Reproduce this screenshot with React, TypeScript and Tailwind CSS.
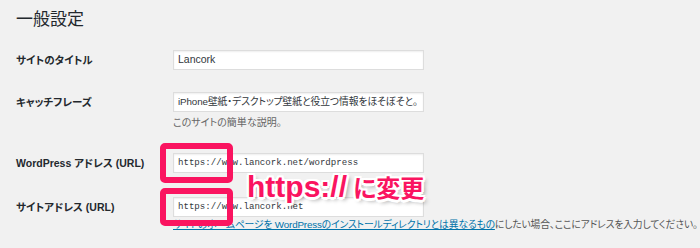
const sans = "font-['Liberation_Sans','Noto_Sans_CJK_JP',sans-serif] [font-feature-settings:'palt']";

const Field = ({
  label,
  value,
  mono,
  small,
  className = "",
}: {
  label: string;
  value: string;
  mono?: boolean;
  small?: boolean;
  className?: string;
}) => (
  <div className={`flex items-center ${className}`}>
    <div className="w-[157px] text-[10.5px] font-bold leading-none text-[#23282d]">
      {label}
    </div>
    <div
      className={`flex h-[20px] w-[251px] items-center overflow-hidden whitespace-nowrap border border-[#dddddd] bg-white pl-[4px] text-[#32373c] shadow-[inset_0_1px_2px_rgba(0,0,0,0.07)] ${
        mono
          ? "font-['Liberation_Mono',monospace] text-[9.1px] [font-feature-settings:normal]"
          : small
          ? "text-[9.8px] tracking-[-0.1px]"
          : "text-[10.5px]"
      }`}
    >
      {value}
    </div>
  </div>
);

export default function App() {
  return (
    <div className={`relative h-[248px] w-[700px] overflow-hidden bg-[#f1f1f1] pl-4 ${sans}`}>
      <h1 className="pt-[11px] text-[17px] font-normal leading-none text-[#23282d]">
        一般設定
      </h1>

      <Field className="mt-[22px]" label="サイトのタイトル" value="Lancork" />
      <Field
        className="mt-[22px]"
        label="キャッチフレーズ"
        value="iPhone壁紙・デスクトップ壁紙と役立つ情報をほそぼそと。"
        small
      />
      <p className="ml-[157px] mt-[6px] text-[10px] leading-none text-[#666666]">
        このサイトの簡単な説明。
      </p>

      <Field
        className="mt-[25px]"
        label="WordPress アドレス (URL)"
        value="https://www.lancork.net/wordpress"
        mono
      />
      <Field
        className="mt-[24px]"
        label="サイトアドレス (URL)"
        value="https://www.lancork.net"
        mono
      />
      <p className="ml-[157px] mt-[3px] whitespace-nowrap text-[9.8px] leading-none tracking-[-0.15px] text-[#555555]">
        <a className="text-[#0073aa] underline">
          サイトのホームページを WordPressのインストールディレクトリとは異なるもの
        </a>
        にしたい場合、ここにアドレスを入力してください。
      </p>

      {/* annotation */}
      <div className="absolute left-[160px] top-[143px] h-[40px] w-[73px] rounded-[5px] border-[6px] border-[#fa1460]" />
      <div className="absolute left-[160px] top-[188px] h-[38px] w-[73px] rounded-[5px] border-[6px] border-[#fa1460]" />
      <div className="absolute left-[247px] top-[172px] flex items-baseline font-bold leading-none text-[#fa1460] [text-shadow:2.5px_0_#fff,-2.5px_0_#fff,0_2.5px_#fff,0_-2.5px_#fff,1.8px_1.8px_#fff,-1.8px_-1.8px_#fff,1.8px_-1.8px_#fff,-1.8px_1.8px_#fff,3px_3px_4px_rgba(0,0,0,0.4)]">
        <span className="font-['Liberation_Sans',sans-serif] text-[30px]">https://</span>
        <span className="ml-[6px] font-['Noto_Sans_CJK_JP',sans-serif] text-[24px]">に変更</span>
      </div>
    </div>
  );
}
